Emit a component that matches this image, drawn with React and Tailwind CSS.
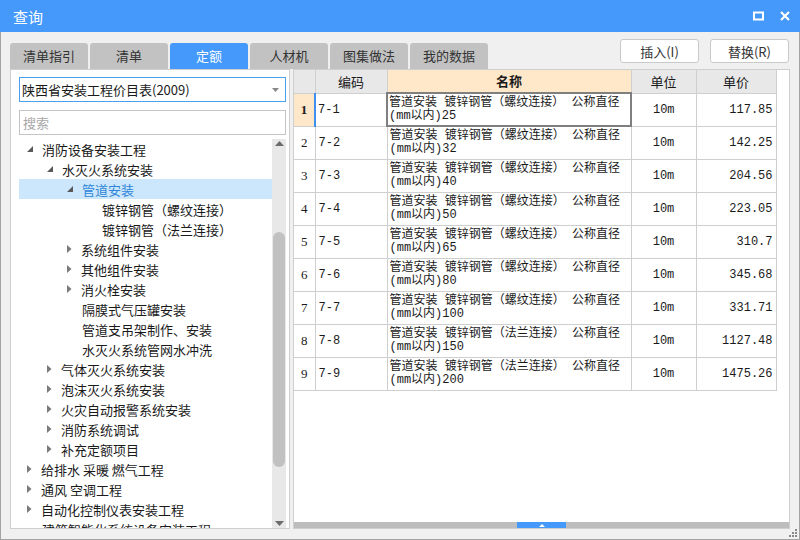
import React from 'react';

const tabs = ['清单指引', '清单', '定额', '人材机', '图集做法', '我的数据'];

// level: indent step, arrow: 'open' | 'closed' | null
const tree = [
  { level: 0, arrow: 'open', text: '消防设备安装工程' },
  { level: 1, arrow: 'open', text: '水灭火系统安装' },
  { level: 2, arrow: 'open', text: '管道安装', selected: true },
  { level: 3, arrow: null, text: '镀锌钢管（螺纹连接）' },
  { level: 3, arrow: null, text: '镀锌钢管（法兰连接）' },
  { level: 2, arrow: 'closed', text: '系统组件安装' },
  { level: 2, arrow: 'closed', text: '其他组件安装' },
  { level: 2, arrow: 'closed', text: '消火栓安装' },
  { level: 2, arrow: null, text: '隔膜式气压罐安装' },
  { level: 2, arrow: null, text: '管道支吊架制作、安装' },
  { level: 2, arrow: null, text: '水灭火系统管网水冲洗' },
  { level: 1, arrow: 'closed', text: '气体灭火系统安装' },
  { level: 1, arrow: 'closed', text: '泡沫灭火系统安装' },
  { level: 1, arrow: 'closed', text: '火灾自动报警系统安装' },
  { level: 1, arrow: 'closed', text: '消防系统调试' },
  { level: 1, arrow: 'closed', text: '补充定额项目' },
  { level: 0, arrow: 'closed', text: '给排水 采暖 燃气工程' },
  { level: 0, arrow: 'closed', text: '通风 空调工程' },
  { level: 0, arrow: 'closed', text: '自动化控制仪表安装工程' },
  { level: 0, arrow: null, text: '建筑智能化系统设备安装工程' },
];

const indents = ['pl-[8px]', 'pl-[28px]', 'pl-[48px]', 'pl-[68px]'];

const rows = [
  ['7-1', '螺纹连接', '25', '117.85'],
  ['7-2', '螺纹连接', '32', '142.25'],
  ['7-3', '螺纹连接', '40', '204.56'],
  ['7-4', '螺纹连接', '50', '223.05'],
  ['7-5', '螺纹连接', '65', '310.7'],
  ['7-6', '螺纹连接', '80', '345.68'],
  ['7-7', '螺纹连接', '100', '331.71'],
  ['7-8', '法兰连接', '150', '1127.48'],
  ['7-9', '法兰连接', '200', '1475.26'],
];

const Arrow = ({ type }) => {
  if (type === 'open')
    return (
      <svg width="6" height="6" viewBox="0 0 6 6" className="shrink-0">
        <path d="M6 0 L6 6 L0 6 Z" fill="#595959" />
      </svg>
    );
  if (type === 'closed')
    return (
      <svg width="5" height="8" viewBox="0 0 5 8" className="shrink-0">
        <path d="M0 0 L4.5 4 L0 8 Z" fill="#7a7a7a" />
      </svg>
    );
  return <span className="w-[6px] shrink-0" />;
};

const App = () => {
  return (
    <div className="w-[800px] h-[540px] flex flex-col bg-[#f0f0f0] overflow-hidden font-['Noto_Sans_CJK_SC',sans-serif] text-[#1a1a1a]">
      {/* title bar */}
      <div className="h-[32px] bg-[#4499fb] flex items-center justify-between pl-[13px] pr-[10px] shrink-0">
        <span className="text-white text-[15px] leading-none">查询</span>
        <div className="flex items-center gap-[16px]">
          <svg width="11" height="10" viewBox="0 0 11 10">
            <rect x="1" y="1.5" width="9" height="7" fill="none" stroke="white" strokeWidth="2" />
          </svg>
          <svg width="10" height="10" viewBox="0 0 10 10">
            <path d="M1 1 L9 9 M9 1 L1 9" stroke="white" strokeWidth="2.2" />
          </svg>
        </div>
      </div>

      <div className="flex-1 min-h-0 flex flex-col border-x border-b border-[#a3a3a3] px-[9px] pb-[10px] relative">
        {/* tabs + buttons */}
        <div className="h-[37px] flex justify-between shrink-0">
          <div className="flex items-end gap-[2px]">
            {tabs.map((t) => (
              <div
                key={t}
                className={
                  t === '定额'
                    ? 'w-[78px] h-[26px] rounded-t-[3px] bg-[#4499fb] text-white text-[13px] flex items-center justify-center'
                    : 'w-[78px] h-[26px] rounded-t-[3px] bg-[#c2c2c2] text-[#333] text-[13px] flex items-center justify-center'
                }
              >
                {t}
              </div>
            ))}
          </div>
          <div className="flex gap-[11px] pt-[7px] pr-[1px]">
            <button className="w-[79px] h-[24px] bg-white border border-[#c9c9c9] rounded-[3px] text-[13px] text-[#333] leading-none">
              插入(I)
            </button>
            <button className="w-[79px] h-[24px] bg-white border border-[#c9c9c9] rounded-[3px] text-[13px] text-[#333] leading-none">
              替换(R)
            </button>
          </div>
        </div>

        {/* panels */}
        <div className="flex-1 flex gap-[3px] min-h-0">
          {/* left panel */}
          <div className="w-[280px] min-h-0 bg-white border border-[#cfcfcf] flex flex-col pl-[8px] pr-[3px] pt-[7px] overflow-hidden">
            <div className="h-[25px] w-[267px] border border-[#4a9ff0] flex items-center justify-between pl-[2px] pr-[6px] shrink-0">
              <span className="text-[13px] text-[#1a1a1a]">陕西省安装工程价目表(2009)</span>
              <svg width="7" height="4" viewBox="0 0 7 4">
                <path d="M0 0 L7 0 L3.5 4 Z" fill="#888" />
              </svg>
            </div>
            <div className="mt-[8px] h-[25px] w-[267px] border border-[#c4c4c4] flex items-center pl-[3px] shrink-0">
              <span className="text-[13px] text-[#a8a8a8]">搜索</span>
            </div>
            <div className="mt-[4px] flex flex-1 min-h-0">
              <div className="w-[253px] overflow-hidden">
                {tree.map((n, i) => (
                  <div
                    key={i}
                    className={`h-[20px] flex items-center gap-[9px] ${indents[n.level]} ${n.selected ? 'bg-[#cce6fc]' : ''}`}
                  >
                    {n.level < 3 ? <Arrow type={n.arrow} /> : <span className="w-[6px] shrink-0" />}
                    <span
                      className={`text-[13px] whitespace-nowrap leading-none ${n.selected ? 'text-[#2f86d8]' : 'text-[#1a1a1a]'}`}
                    >
                      {n.text}
                    </span>
                  </div>
                ))}
              </div>
              <div className="w-[14px] bg-[#e8e8e8] flex flex-col items-center justify-between py-[2px]">
                <svg width="9" height="5" viewBox="0 0 9 5">
                  <path d="M0 5 L4.5 0 L9 5 Z" fill="#6b6b6b" />
                </svg>
                <div className="flex-1 w-full flex flex-col pt-[86px] pb-[54px] px-[1px]">
                  <div className="flex-1 bg-[#c1c1c1] rounded-full" />
                </div>
                <svg width="9" height="5" viewBox="0 0 9 5">
                  <path d="M0 0 L9 0 L4.5 5 Z" fill="#6b6b6b" />
                </svg>
              </div>
            </div>
          </div>

          {/* right panel */}
          <div className="flex-1 bg-white border border-[#cfcfcf] flex flex-col min-w-0 min-h-0">
            <div className="flex-1 overflow-hidden">
              <table className="border-collapse table-fixed font-['Liberation_Mono','Noto_Sans_CJK_SC',monospace] text-[12px]">
                <colgroup>
                  <col className="w-[21px]" />
                  <col className="w-[72px]" />
                  <col className="w-[244px]" />
                  <col className="w-[65px]" />
                  <col className="w-[80px]" />
                </colgroup>
                <thead>
                  <tr className="h-[23px] font-['Noto_Sans_CJK_SC',sans-serif] text-[13px]">
                    <th className="border border-[#cfcfcf] border-t-0 border-l-0 bg-[#e8e8e8]" />
                    <th className="border border-[#cfcfcf] border-t-0 bg-[#e8e8e8] font-normal">编码</th>
                    <th className="border border-[#cfcfcf] border-t-0 bg-[#ffe7c9] font-bold">名称</th>
                    <th className="border border-[#cfcfcf] border-t-0 bg-[#e8e8e8] font-normal">单位</th>
                    <th className="border border-[#cfcfcf] border-t-0 bg-[#e8e8e8] font-normal">单价</th>
                  </tr>
                </thead>
                <tbody>
                  {rows.map((r, i) => (
                    <tr key={r[0]} className="h-[33px]">
                      <td
                        className={
                          i === 0
                            ? "border border-[#cfcfcf] border-l-0 bg-[#ffe7c9] text-center font-bold font-['Liberation_Serif',serif] text-[13px]"
                            : "border border-[#cfcfcf] border-l-0 text-center font-['Liberation_Serif',serif] text-[13px]"
                        }
                      >
                        {i + 1}
                      </td>
                      <td
                        className={
                          i === 0
                            ? 'border border-[#cfcfcf] border-l-2 border-l-[#3f8ff0] pl-[2px] align-middle'
                            : 'border border-[#cfcfcf] pl-[3px] align-middle'
                        }
                      >
                        {r[0]}
                      </td>
                      <td
                        className={
                          i === 0
                            ? 'border-2 border-[#7f7f7f] pl-[1px] leading-[13px] align-middle'
                            : 'border border-[#cfcfcf] pl-[2px] leading-[13px] align-middle'
                        }
                      >
                        管道安装 镀锌钢管（{r[1]}） 公称直径
                        <br />
                        (mm以内){r[2]}
                      </td>
                      <td className="border border-[#cfcfcf] text-center">10m</td>
                      <td className="border border-[#cfcfcf] text-right pr-[3px]">{r[3]}</td>
                    </tr>
                  ))}
                </tbody>
              </table>
            </div>
            <div className="h-[6px] bg-[#bdbdbd] flex justify-center shrink-0">
              <div className="w-[49px] h-[6px] bg-[#4499fb] flex items-center justify-center">
                <svg width="6" height="3" viewBox="0 0 6 3">
                  <path d="M0 3 L3 0 L6 3 Z" fill="white" />
                </svg>
              </div>
            </div>
          </div>
        </div>

        {/* resize grip */}
        <div className="absolute right-[2px] bottom-[2px] grid grid-cols-3 gap-[1px]">
          <span className="w-[2px] h-[2px]" />
          <span className="w-[2px] h-[2px]" />
          <span className="w-[2px] h-[2px] bg-[#8a8a8a]" />
          <span className="w-[2px] h-[2px]" />
          <span className="w-[2px] h-[2px] bg-[#8a8a8a]" />
          <span className="w-[2px] h-[2px] bg-[#8a8a8a]" />
          <span className="w-[2px] h-[2px] bg-[#8a8a8a]" />
          <span className="w-[2px] h-[2px] bg-[#8a8a8a]" />
          <span className="w-[2px] h-[2px] bg-[#8a8a8a]" />
        </div>
      </div>
    </div>
  );
};

export default App;
